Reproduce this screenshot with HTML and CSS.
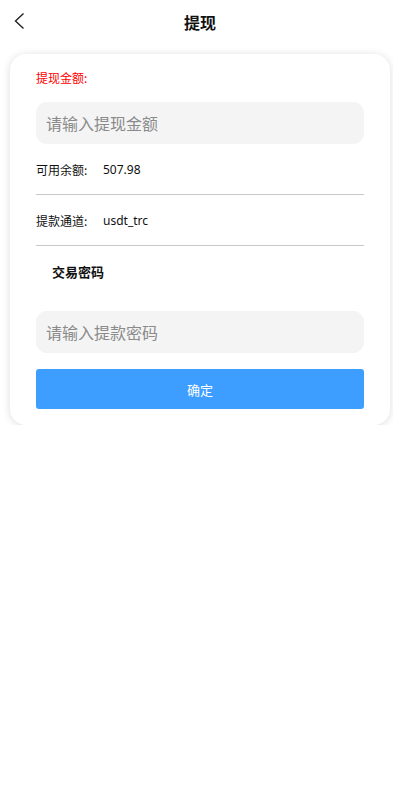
FILE: index.html
```html
<!DOCTYPE html>
<html lang="zh">
<head>
<meta charset="utf-8">
<meta name="viewport" content="width=device-width, initial-scale=1">
<link rel="stylesheet" href="styles.css">
<title>提现</title>
</head>
<body>
<header class="topbar">
  <span class="back">
    <svg width="12" height="18" viewBox="0 0 12 18"><path d="M10.5 1.5 L2.5 9 L10.5 16.5" fill="none" stroke="#222" stroke-width="1.4"/></svg>
  </span>
  <h1 class="title">提现</h1>
</header>
<main class="card">
  <div class="label-red">提现金额:</div>
  <div class="field"><input class="input" placeholder="请输入提现金额"></div>
  <div class="row"><span class="row-key">可用余额:</span><span class="row-val">507.98</span></div>
  <div class="row"><span class="row-key">提款通道:</span><span class="row-val">usdt_trc</span></div>
  <div class="label-bold">交易密码</div>
  <div class="field field-pw"><input class="input" type="password" placeholder="请输入提款密码"></div>
  <button class="submit">确定</button>
</main>
</body>
</html>
```
FILE: styles.css
```css
* { box-sizing: border-box; }
html, body { margin: 0; padding: 0; background: #fff; }
body {
  font-family: "Noto Sans CJK SC", "Noto Sans", sans-serif;
  color: #111;
}
.topbar {
  position: relative;
  height: 44px;
  display: flex;
  align-items: center;
  justify-content: center;
  padding-left: 7px;
}
.back {
  position: absolute;
  left: 13px;
  top: 12px;
  display: flex;
}
.title {
  margin: 0;
  font-size: 16px;
  font-weight: 700;
  line-height: 44px;
}
.card {
  margin: 10px 3px 0 10px;
  background: #fff;
  border-radius: 16px;
  box-shadow: 0 1px 9px rgba(0,0,0,0.14);
  padding: 15px 26px 16px 26px;
  display: flex;
  flex-direction: column;
}
.label-red {
  color: #f00;
  font-size: 12px;
  line-height: 18px;
}
.field {
  margin-top: 15px;
  height: 42px;
  background: #f4f4f4;
  border-radius: 11px;
  display: flex;
  align-items: center;
  padding: 0 10px;
}
.input {
  border: none;
  outline: none;
  background: transparent;
  width: 100%;
  font-family: inherit;
  font-size: 16px;
  color: #333;
  padding: 0;
}
.input::placeholder { color: #8a8a8a; }
.row {
  height: 51px;
  display: flex;
  align-items: center;
  border-bottom: 1px solid #c8c8c8;
  font-size: 12px;
}
.row-key { width: 67px; }
.row-val { font-family: "Noto Sans", sans-serif; }
.label-bold {
  font-weight: 700;
  font-size: 13px;
  padding-left: 16px;
  height: 51px;
  display: flex;
  align-items: center;
}
.field-pw { margin-top: 14px; }
.submit {
  margin-top: 16px;
  height: 40px;
  border: none;
  border-radius: 3px;
  background: #3d9eff;
  color: #fff;
  font-family: inherit;
  font-size: 13px;
}
```
